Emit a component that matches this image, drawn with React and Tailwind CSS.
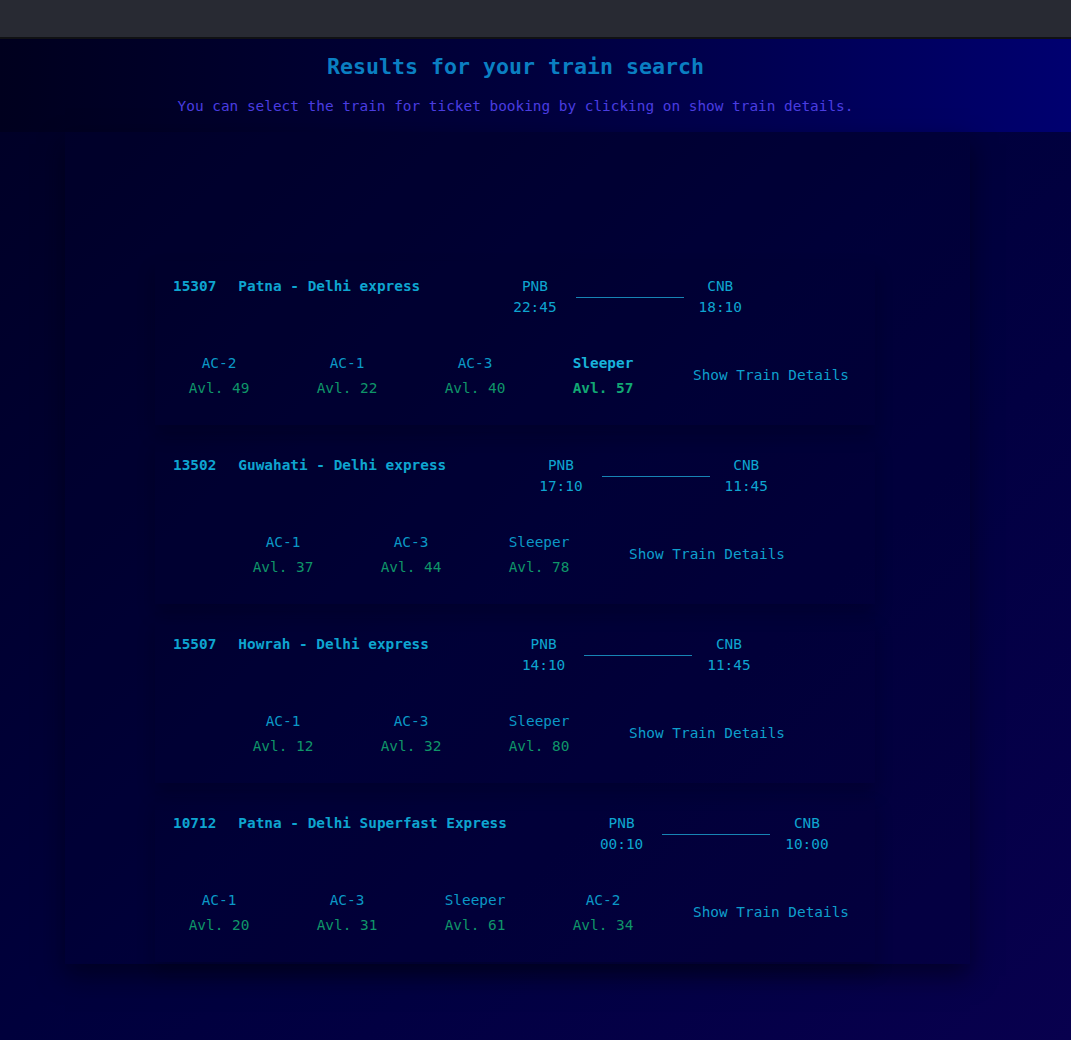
const trains = [
  {
    no: '15307',
    name: 'Patna - Delhi express',
    from: 'PNB',
    to: 'CNB',
    dep: '22:45',
    arr: '18:10',
    classes: [
      { name: 'AC-2', avl: 49 },
      { name: 'AC-1', avl: 22 },
      { name: 'AC-3', avl: 40 },
      { name: 'Sleeper', avl: 57, active: true },
    ],
  },
  {
    no: '13502',
    name: 'Guwahati - Delhi express',
    from: 'PNB',
    to: 'CNB',
    dep: '17:10',
    arr: '11:45',
    classes: [
      { name: 'AC-1', avl: 37 },
      { name: 'AC-3', avl: 44 },
      { name: 'Sleeper', avl: 78 },
    ],
  },
  {
    no: '15507',
    name: 'Howrah - Delhi express',
    from: 'PNB',
    to: 'CNB',
    dep: '14:10',
    arr: '11:45',
    classes: [
      { name: 'AC-1', avl: 12 },
      { name: 'AC-3', avl: 32 },
      { name: 'Sleeper', avl: 80 },
    ],
  },
  {
    no: '10712',
    name: 'Patna - Delhi Superfast Express',
    from: 'PNB',
    to: 'CNB',
    dep: '00:10',
    arr: '10:00',
    classes: [
      { name: 'AC-1', avl: 20 },
      { name: 'AC-3', avl: 31 },
      { name: 'Sleeper', avl: 61 },
      { name: 'AC-2', avl: 34 },
    ],
  },
];

function TrainCard({ train }) {
  return (
    <div className="w-[720px] ml-[90px] pt-[15px] pb-[24px] bg-[#00002a]/15 shadow-[0_10px_16px_rgba(0,0,10,0.25)]">
      {/* header row */}
      <div className="flex items-start pl-[18px] leading-[21px] text-[#0ea5d0]">
        <span className="font-bold">{train.no}</span>
        <span className="font-bold ml-[22px]">{train.name}</span>
        <div className="flex items-center ml-[93px]">
          <div className="flex flex-col items-center">
            <span>{train.from}</span>
            <span>{train.dep}</span>
          </div>
          <div className="w-[108px] border-t border-[#1784b4] ml-[19px] mr-[15px]" />
          <div className="flex flex-col items-center">
            <span>{train.to}</span>
            <span>{train.arr}</span>
          </div>
        </div>
      </div>

      {/* classes row */}
      <div className="flex justify-center items-center mt-[33px]">
        {train.classes.map((c, i) => (
          <div
            key={i}
            className={`w-[128px] flex flex-col items-center leading-[25px] ${c.active ? 'font-bold' : ''}`}
          >
            <span className={c.active ? 'text-[#18b2da]' : 'text-[#0b98c6]'}>{c.name}</span>
            <span className={c.active ? 'text-[#12a874]' : 'text-[#0f9569]'}>Avl. {c.avl}</span>
          </div>
        ))}
        <div className="w-[208px] text-center text-[#0e9fcc]">Show Train Details</div>
      </div>
    </div>
  );
}

export default function App() {
  return (
    <div
      className="min-h-screen bg-gradient-to-br from-[#000024] via-[#00003c] to-[#08004e] text-[14.4px]"
      style={{ fontFamily: '"DejaVu Sans Mono", "Liberation Mono", monospace' }}
    >
      {/* top bar */}
      <div className="h-[39px] bg-[#282a33] border-b-2 border-[#101114]" />

      {/* heading */}
      <header className="h-[93px] bg-gradient-to-r from-[#00001e] via-[#00003e] to-[#000070] flex flex-col items-center pr-[40px]">
        <h1 className="mt-[14px] text-[21.6px] font-bold leading-[28px] text-[#0a7fc2]">
          Results for your train search
        </h1>
        <p className="mt-[15px] leading-[20px] text-[#4a3de0]">
          You can select the train for ticket booking by clicking on show train details.
        </p>
      </header>

      {/* results box */}
      <main className="ml-[65px] w-[905px] pt-[129px] pb-[2px] bg-[#00002a]/25 shadow-[0_12px_24px_rgba(0,0,12,0.5)] flex flex-col gap-[15px]">
        {trains.map((t) => (
          <TrainCard key={t.no} train={t} />
        ))}
      </main>
      <div className="h-[75px]" />
    </div>
  );
}
